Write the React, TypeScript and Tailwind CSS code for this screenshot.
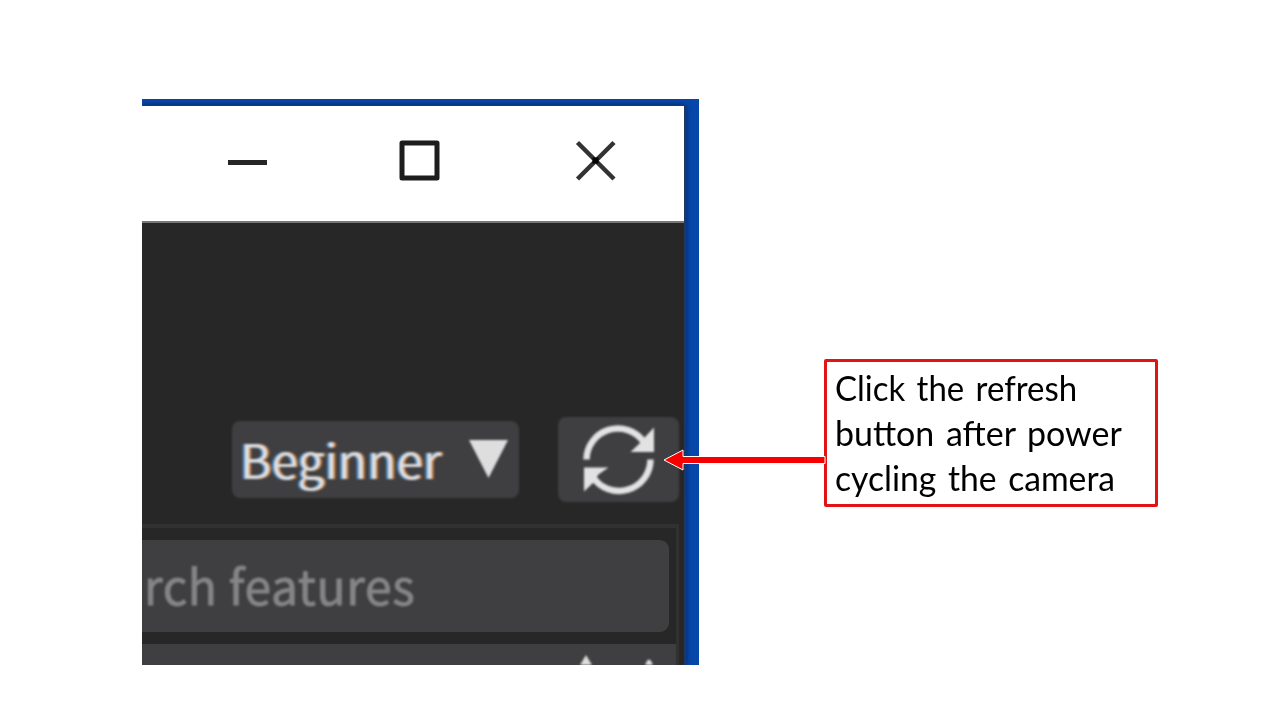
import React from "react";

function WindowControls() {
  return (
    <div className="flex h-[117px] items-center border-b-2 border-[#777] bg-white pl-[84px] pb-[5px] blur-[0.7px]">
      <svg className="h-11 w-11" viewBox="0 0 44 44" fill="none" stroke="#262626">
        <path d="M2 23.5H41" strokeWidth="5" />
      </svg>
      <svg className="ml-[128px] h-11 w-11" viewBox="0 0 44 44" fill="none" stroke="#1d1d1d">
        <rect x="4" y="4" width="35" height="35" strokeWidth="5" strokeLinejoin="round" />
      </svg>
      <svg className="ml-[132px] h-11 w-11" viewBox="0 0 44 44" fill="none" stroke="#333333">
        <path d="M3.500 3.500L40 40M40 3.500L3.500 40" strokeWidth="4.5" />
        <rect x="19.5" y="19.5" width="4" height="4" fill="#000" stroke="#000" strokeWidth="2" />
      </svg>
    </div>
  );
}

function RefreshIcon() {
  return (
    <svg className="h-20 w-20" viewBox="578.5 419.5 80 80" fill="none">
      <g stroke="#e2e2e2" strokeWidth="6.5">
        <path d="M586 459A31.500 31.500 0 0 1 643 441" />
        <path d="M650 459A31.500 31.500 0 0 1 592 476" />
      </g>
      <path d="M653.500 427V451.500H630L639 443L645 436Z" fill="#e2e2e2" />
      <path d="M583.500 491V467H608L598 474L593 482Z" fill="#e2e2e2" />
    </svg>
  );
}

function Toolbar() {
  return (
    <div className="flex h-[85px] items-start pl-[90px]">
      <div className="mt-[4px] flex h-[77px] w-[287px] items-center rounded-[8px] bg-[#3f3f41] pl-[8px] blur-[0.9px]">
        <span className="mb-[4px] w-[205px] whitespace-nowrap text-[48px] leading-[72px] text-[#dedede] font-['Noto_Sans_CJK_SC',sans-serif] [text-shadow:-2px_0_0_#4f8fd0,2px_0_0_#c0783a]">
          Beginner
        </span>
        <svg className="ml-[24px] mb-px h-10 w-10" viewBox="0 0 40 40">
          <path d="M0 1H39L19.500 39Z" fill="#dedede" />
        </svg>
      </div>
      <div className="ml-[39px] flex h-[85px] w-[121px] items-center justify-center rounded-[8px] bg-[#3f3f41] blur-[0.9px]">
        <RefreshIcon />
      </div>
    </div>
  );
}

function FeaturePanel() {
  return (
    <div className="mt-[22px] mr-[5px] flex flex-1 flex-col border-t-[4px] border-r-[3px] border-[#313131]">
      <div className="mt-[12px] mr-[7px] flex h-[92px] shrink-0 items-center overflow-hidden rounded-r-[9px] bg-[#3f3f41] pl-[2px]">
        <span className="mb-[4px] whitespace-nowrap text-[48px] leading-[88px] tracking-[0.6px] text-[#858586] blur-[0.9px] font-['Noto_Sans_CJK_SC',sans-serif] [-webkit-text-stroke:0.9px_#858586]">
          rch features
        </span>
      </div>
      <div className="mt-[12px] flex flex-1 items-end bg-[#3f3f41]">
        <svg className="ml-[434px] h-[12px] w-[84px] blur-[0.8px]" viewBox="0 0 84 12">
          <path d="M4 12L10 2L16 12ZM69 12L71 8Q73 5 75 8L77 12Z" fill="#dedede" />
        </svg>
      </div>
    </div>
  );
}

export default function App() {
  return (
    <main className="relative flex h-[720px] w-[1280px] overflow-hidden bg-white">
      <section className="mt-[99px] ml-[142px] flex h-[566px] w-[557px] overflow-hidden bg-[#0647a9] pt-[6px]">
        <div className="flex h-[560px] w-[544px] flex-col border-t border-r-2 border-[#20375f] bg-[#272727] shadow-[0_0_5px_#06255f]">
          <WindowControls />
          <div className="flex h-[442px] flex-col pt-[194px]">
            <Toolbar />
            <FeaturePanel />
          </div>
        </div>
      </section>
      <aside className="mt-[359px] ml-[125px] h-[148px] w-[334px] rounded-[2px] border-[3px] border-[#e31313] bg-white pt-[3px] pl-[8px]">
        <p className="text-[34px] leading-[45px] whitespace-nowrap text-black font-['Lato',sans-serif] [word-spacing:3px]">
          <span className="block w-fit origin-left scale-x-[0.97]">Click the refresh</span>
          <span className="block w-fit origin-left scale-x-[0.999]">button after power</span>
          <span className="block w-fit origin-left scale-x-[0.99]">cycling the camera</span>
        </p>
      </aside>
      <svg className="absolute top-[448px] left-[662px] h-6 w-[166px]" viewBox="662 448 166 24">
        <path d="M664 460L683 450V456.500H825V463.500H683V470Z" fill="#f90000" stroke="#fff" strokeWidth="1" />
      </svg>
    </main>
  );
}
